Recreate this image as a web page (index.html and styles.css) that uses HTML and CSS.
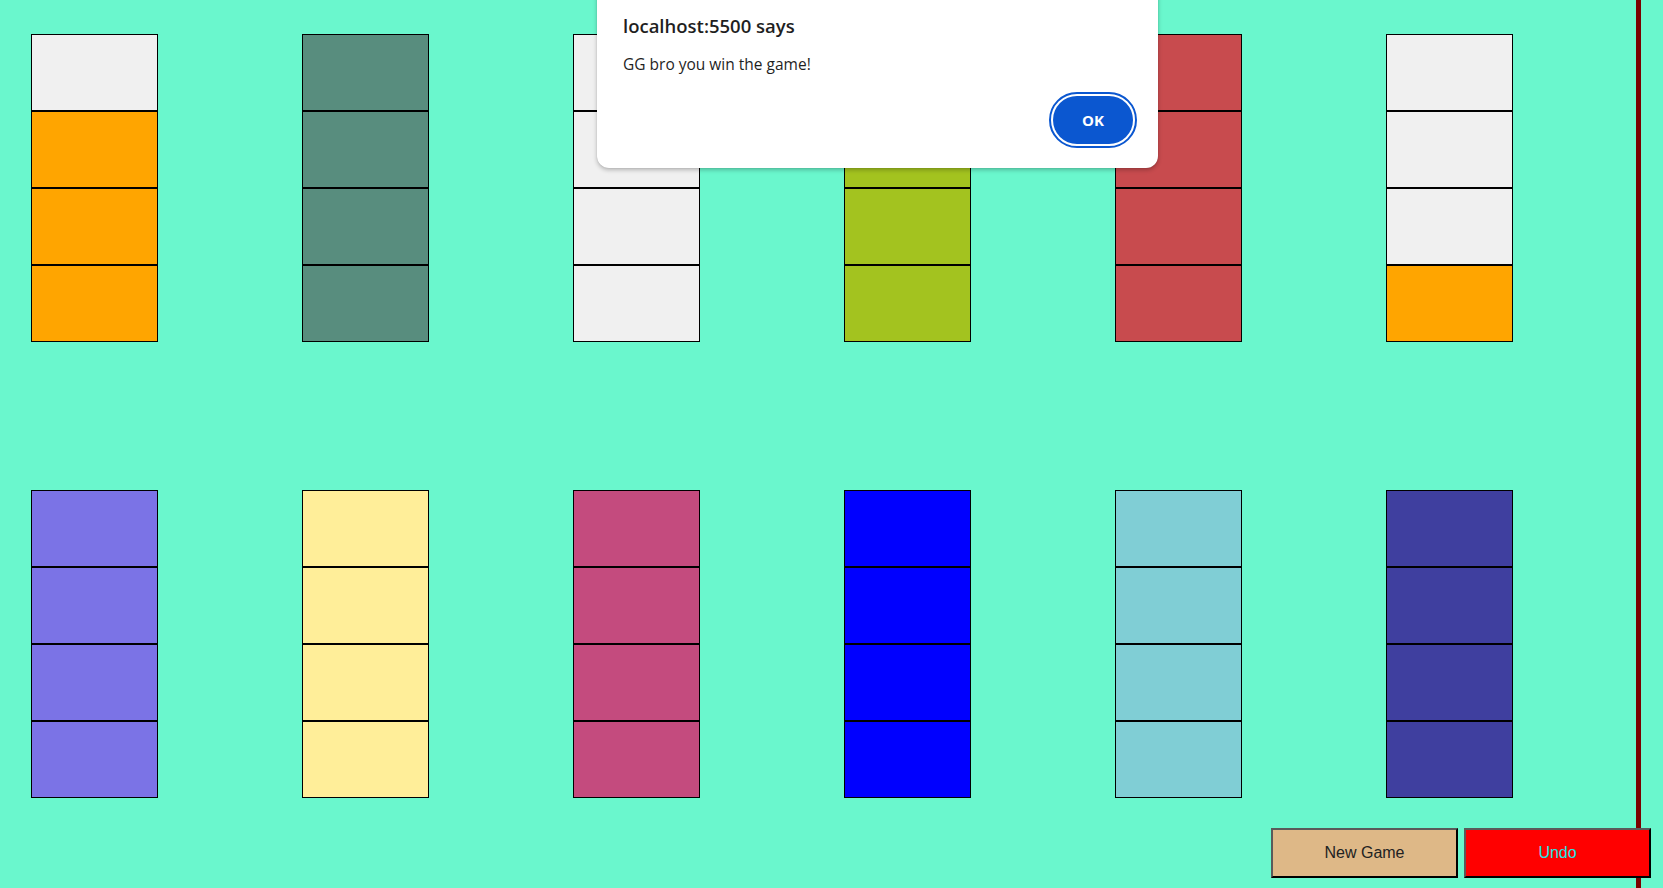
FILE: index.html
```html
<!DOCTYPE html>
<html lang="en">
<head>
<meta charset="utf-8">
<title>Sort Game</title>
<link rel="stylesheet" href="styles.css">
</head>
<body>
<div class="game">
  <div class="board">
    <div class="tube">
      <div class="ball c-white"></div><div class="ball c-orange"></div><div class="ball c-orange"></div><div class="ball c-orange"></div>
    </div>
    <div class="tube">
      <div class="ball c-sea"></div><div class="ball c-sea"></div><div class="ball c-sea"></div><div class="ball c-sea"></div>
    </div>
    <div class="tube">
      <div class="ball c-white"></div><div class="ball c-white"></div><div class="ball c-white"></div><div class="ball c-white"></div>
    </div>
    <div class="tube">
      <div class="ball c-olive"></div><div class="ball c-olive"></div><div class="ball c-olive"></div><div class="ball c-olive"></div>
    </div>
    <div class="tube">
      <div class="ball c-red"></div><div class="ball c-red"></div><div class="ball c-red"></div><div class="ball c-red"></div>
    </div>
    <div class="tube">
      <div class="ball c-white"></div><div class="ball c-white"></div><div class="ball c-white"></div><div class="ball c-orange"></div>
    </div>
    <div class="tube">
      <div class="ball c-slate"></div><div class="ball c-slate"></div><div class="ball c-slate"></div><div class="ball c-slate"></div>
    </div>
    <div class="tube">
      <div class="ball c-khaki"></div><div class="ball c-khaki"></div><div class="ball c-khaki"></div><div class="ball c-khaki"></div>
    </div>
    <div class="tube">
      <div class="ball c-pink"></div><div class="ball c-pink"></div><div class="ball c-pink"></div><div class="ball c-pink"></div>
    </div>
    <div class="tube">
      <div class="ball c-blue"></div><div class="ball c-blue"></div><div class="ball c-blue"></div><div class="ball c-blue"></div>
    </div>
    <div class="tube">
      <div class="ball c-cyan"></div><div class="ball c-cyan"></div><div class="ball c-cyan"></div><div class="ball c-cyan"></div>
    </div>
    <div class="tube">
      <div class="ball c-navy"></div><div class="ball c-navy"></div><div class="ball c-navy"></div><div class="ball c-navy"></div>
    </div>
  </div>
  <div class="controls">
    <button class="btn btn-new" type="button">New Game</button>
    <button class="btn btn-undo" type="button">Undo</button>
  </div>
</div>

<div class="alert" role="alertdialog">
  <div class="alert-title">localhost:5500 says</div>
  <div class="alert-msg">GG bro you win the game!</div>
  <div class="alert-actions">
    <button class="alert-ok" type="button">OK</button>
  </div>
</div>
</body>
</html>
```

FILE: styles.css
```css
html, body {
  margin: 0;
  padding: 0;
  height: 100%;
  overflow: hidden;
  background: #6af7cd;
}

.game {
  box-sizing: border-box;
  width: 1641px;
  height: 888px;
  border-right: 5px solid #7a0000;
  padding: 34px 0 0 31px;
  display: flex;
  flex-direction: column;
}

.board {
  display: grid;
  grid-template-columns: repeat(6, 127px);
  column-gap: 144px;
  row-gap: 148px;
}

.tube {
  display: flex;
  flex-direction: column;
}

.ball {
  height: 75px;
  border: 1px solid #000;
}

.c-white { background: #f0f0f0; }
.c-orange { background: #ffa500; }
.c-sea { background: #588d7e; }
.c-olive { background: #a3c31f; }
.c-red { background: #c84b4e; }
.c-slate { background: #7b73e6; }
.c-khaki { background: #ffee99; }
.c-pink { background: #c44b7e; }
.c-blue { background: #0000ff; }
.c-cyan { background: #80ced5; }
.c-navy { background: #3f3f9f; }

.controls {
  display: flex;
  justify-content: flex-end;
  gap: 6px;
  margin-top: 30px;
  margin-right: -15px;
}

.btn {
  width: 187px;
  height: 50px;
  font-family: "Liberation Sans", Arial, sans-serif;
  font-size: 16px;
  border-width: 2px;
  border-style: solid;
  border-color: #5a5a5a #000 #000 #5a5a5a;
  padding: 0;
}

.btn-new {
  background: #deb887;
  color: #222;
}

.btn-undo {
  background: #ff0000;
  color: #22e6e6;
}

.alert {
  position: absolute;
  left: 597px;
  top: -20px;
  width: 561px;
  height: 188px;
  box-sizing: border-box;
  background: #fff;
  border-radius: 12px;
  box-shadow: 0 2px 4px rgba(0,0,0,0.25), 0 0 1px rgba(0,0,0,0.2);
  padding: 34px 24px 24px 26px;
  display: flex;
  flex-direction: column;
  font-family: "Open Sans", "Noto Sans", sans-serif;
  color: #1f1f1f;
}

.alert-title {
  font-size: 18.5px;
  font-weight: 600;
  line-height: 24px;
}

.alert-msg {
  font-size: 15.5px;
  line-height: 20px;
  margin-top: 16px;
}

.alert-actions {
  margin-top: auto;
  display: flex;
  justify-content: flex-end;
}

.alert-ok {
  width: 80px;
  height: 48px;
  border: none;
  border-radius: 24px;
  background: #0b57d0;
  color: #fff;
  font-family: "Open Sans", "Noto Sans", sans-serif;
  font-size: 15px;
  font-weight: 700;
  outline: 2px solid #0b57d0;
  outline-offset: 2px;
  margin-right: 1px;
}
```
